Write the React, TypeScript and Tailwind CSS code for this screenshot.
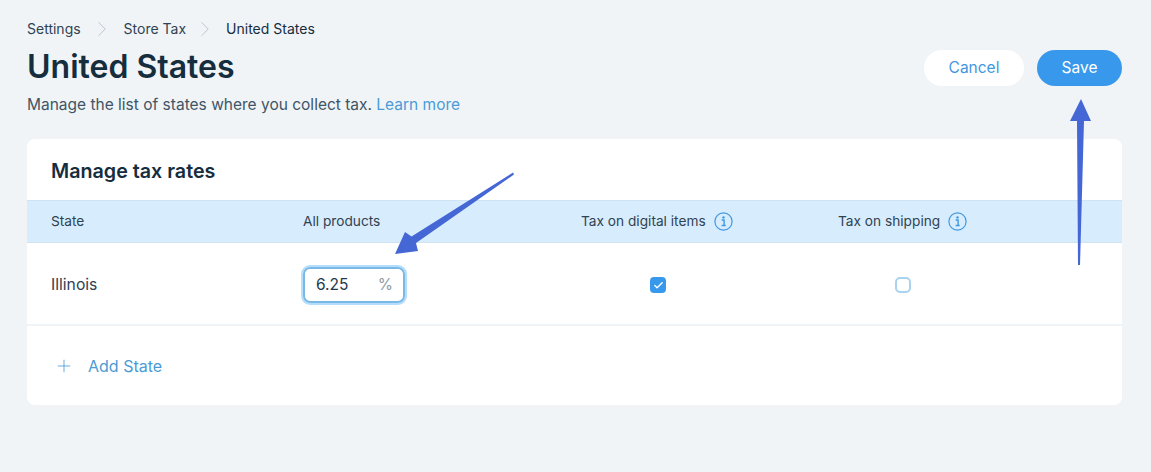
import { Check, ChevronRight, Plus } from "lucide-react";

function InfoIcon() {
  return (
    <svg width="19" height="19" viewBox="0 0 19 19" fill="none" className="shrink-0">
      <circle cx="9.5" cy="9.5" r="8.6" stroke="#3f97e0" strokeWidth="1.2" />
      <circle cx="9.5" cy="5.4" r="1.2" fill="#3f97e0" />
      <path d="M7.7 8H10.1V13.3M7.7 13.5H11.7" stroke="#3f97e0" strokeWidth="1.4" />
    </svg>
  );
}

export default function App() {
  return (
    <div className="relative w-[1151px] h-[472px] overflow-hidden bg-[#f0f4f7] font-['Inter',sans-serif] text-[#162d3d]">
      <div className="pl-[27px] pt-[20px] pr-[29px]">
        <div className="flex items-start justify-between h-[119px]">
          <div>
            <div className="flex items-center h-[18px] text-[14px] leading-[18px] text-[#2f4252]">
              <span>Settings</span>
              <ChevronRight className="ml-[8.5px] mr-[8.5px] w-[26px] h-[26px] text-[#b9c4cc]" strokeWidth={0.9} />
              <span>Store Tax</span>
              <ChevronRight className="ml-[5.5px] mr-[8.5px] w-[26px] h-[26px] text-[#b9c4cc]" strokeWidth={0.9} />
              <span className="text-[#162d3d]">United States</span>
            </div>
            <h1 className="mt-[9px] text-[32px] leading-[40px] font-semibold text-[#162d3d]">United States</h1>
            <p className="mt-[8px] text-[15.5px] leading-[20px] text-[#3f5566]">
              Manage the list of states where you collect tax. <span className="text-[#4a9bd6]">Learn more</span>
            </p>
          </div>
          <div className="flex gap-[13px] mt-[30px]">
            <button className="w-[100px] h-[36px] rounded-full bg-white text-[15.5px] text-[#3f97e0]">Cancel</button>
            <button className="w-[85px] h-[36px] rounded-full bg-[#3899ec] text-[15.5px] text-white">Save</button>
          </div>
        </div>

        <div className="h-[266px] rounded-[8px] bg-white overflow-hidden">
          <div className="h-[61px] flex items-center pl-[24px]">
            <h2 className="text-[19.7px] font-semibold leading-[24px] pt-[2px]">Manage tax rates</h2>
          </div>
          <div className="h-[43px] grid grid-cols-[252px_278px_257px_1fr] items-center pl-[24px] bg-[#d7edfd] border-y border-[#cfe3f3] text-[13.7px] text-[#2f4252]">
            <span>State</span>
            <span>All products</span>
            <span className="flex items-center gap-[8px]">Tax on digital items <InfoIcon /></span>
            <span className="flex items-center gap-[8px]">Tax on shipping <InfoIcon /></span>
          </div>
          <div className="h-[83px] pt-[3px] grid grid-cols-[252px_278px_257px_1fr] items-center pl-[24px] border-b-2 border-[#f0f4f7]">
            <span className="text-[15.7px] text-[#2f4252]">Illinois</span>
            <div className="w-[102px] h-[36px] flex items-center justify-between pl-[11px] pr-[10px] rounded-[7px] border-2 border-[#7ab8e6] ring-[2px] ring-[#b5defc] text-[15.5px] text-[#22384a]">
              <span>6.25</span>
              <span className="text-[#8a9aa6]">%</span>
            </div>
            <div className="flex pl-[69px]">
              <span className="w-[16px] h-[16px] rounded-[4px] bg-[#3899ec] flex items-center justify-center">
                <Check className="w-[11px] h-[11px] text-white" strokeWidth={3} />
              </span>
            </div>
            <div className="flex pl-[57px]">
              <span className="w-[16px] h-[16px] rounded-[5px] bg-white border-2 border-[#a8d2ee]" />
            </div>
          </div>
          <div className="flex items-center h-[79px] pt-[1px] pl-[27px] text-[#4a9bd6]">
            <Plus className="w-[20px] h-[20px]" strokeWidth={1} />
            <span className="ml-[14px] text-[16px]">Add State</span>
          </div>
        </div>
      </div>

      {/* annotation arrows drawn over the screenshot */}
      <svg width="1151" height="472" viewBox="0 0 1151 472" className="absolute inset-0 pointer-events-none">
        <path d="M513 172.5L514 174.5L416 243L418 251L395 254L405 232L411.5 236.5Z" fill="#4567d6" />
        <path d="M1081 99L1091 121L1084 121L1080 265L1078 265L1077 121L1070 121Z" fill="#4567d6" />
      </svg>
    </div>
  );
}
